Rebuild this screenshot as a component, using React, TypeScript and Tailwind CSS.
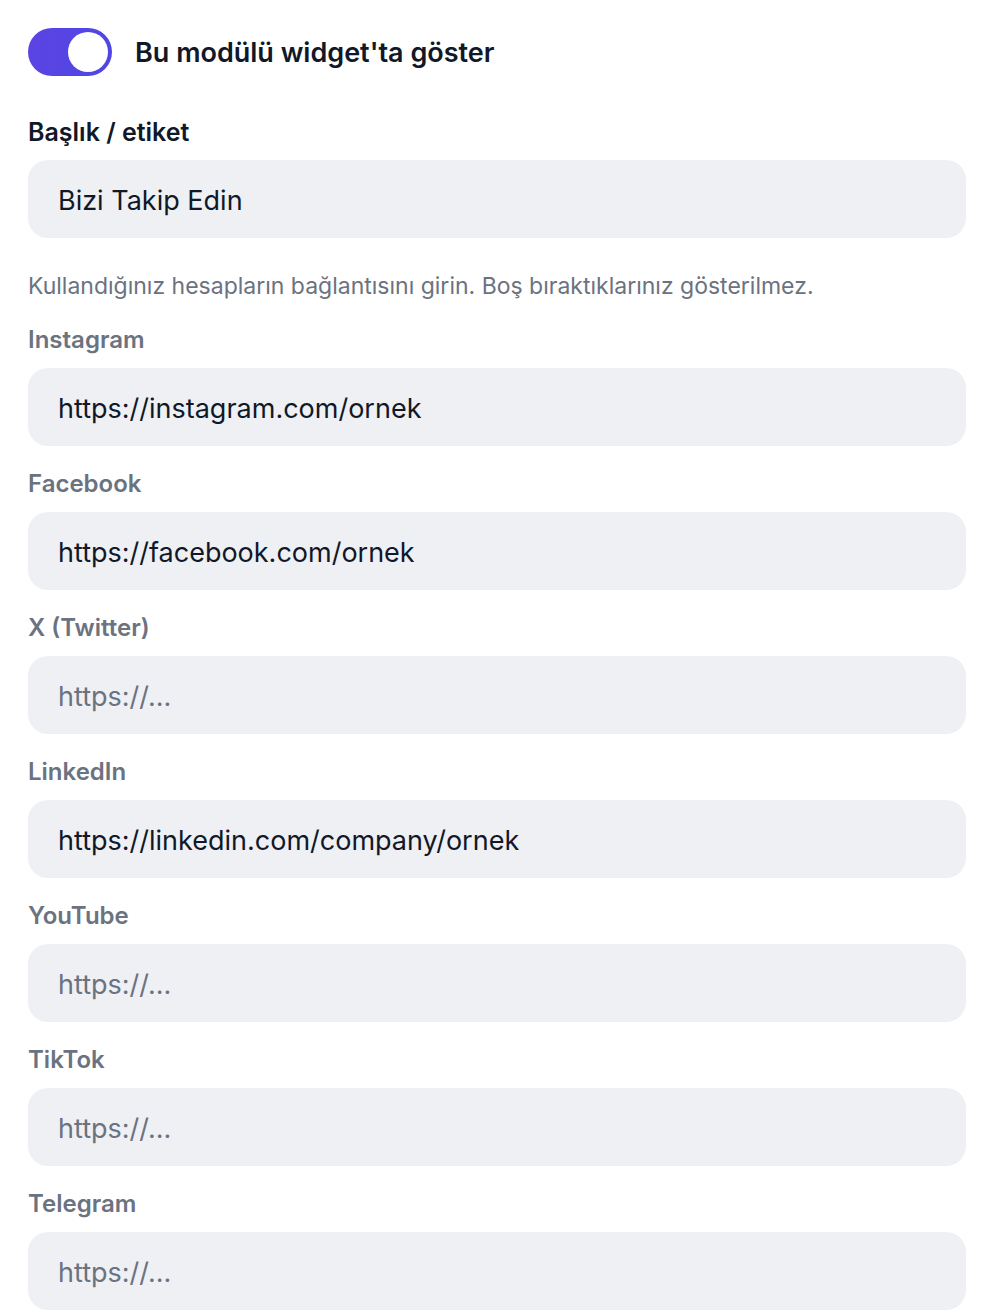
import React from "react";

const fields: { label: string; value: string }[] = [
  { label: "Instagram", value: "https://instagram.com/ornek" },
  { label: "Facebook", value: "https://facebook.com/ornek" },
  { label: "X (Twitter)", value: "" },
  { label: "LinkedIn", value: "https://linkedin.com/company/ornek" },
  { label: "YouTube", value: "" },
  { label: "TikTok", value: "" },
  { label: "Telegram", value: "" },
];

function Field({ label, value, dark }: { label: string; value: string; dark?: boolean }) {
  return (
    <div className="flex flex-col">
      <div
        className={`leading-[32px] font-semibold mb-[12px] ${dark ? "text-[25px] text-[#111827]" : "text-[24px] text-[#6b7280]"}`}
      >
        {label}
      </div>
      <div className="h-[78px] rounded-[20px] bg-[#eef0f4] flex items-center px-[30px] pt-[4px]">
        {value ? (
          <span className="text-[27px] text-[#111827]">{value}</span>
        ) : (
          <span className="text-[27px] text-[#6b7280]">https://...</span>
        )}
      </div>
    </div>
  );
}

export default function App() {
  return (
    <div
      className="bg-white w-[994px] min-h-[1316px] px-[28px] pt-[28px] pb-[6px]"
      style={{ fontFamily: "Inter, 'Noto Sans', sans-serif" }}
    >
      <div className="flex items-center gap-[23px] h-[48px]">
        <div className="w-[84px] h-[48px] rounded-full bg-gradient-to-r from-[#5b44e3] to-[#4f46e5] flex items-center justify-end pr-[4px]">
          <div className="w-[40px] h-[40px] rounded-full bg-white" />
        </div>
        <div className="text-[27px] font-semibold text-[#111827] pt-[2px]">Bu modülü widget'ta göster</div>
      </div>

      <div className="mt-[40px]">
        <Field label="Başlık / etiket" value="Bizi Takip Edin" dark />
      </div>

      <div className="mt-[33px] text-[23px] leading-[30px] text-[#6b7280]">
        Kullandığınız hesapların bağlantısını girin. Boş bıraktıklarınız gösterilmez.
      </div>

      <div className="mt-[23px] flex flex-col gap-[22px]">
        {fields.map((f) => (
          <Field key={f.label} label={f.label} value={f.value} />
        ))}
      </div>
    </div>
  );
}
